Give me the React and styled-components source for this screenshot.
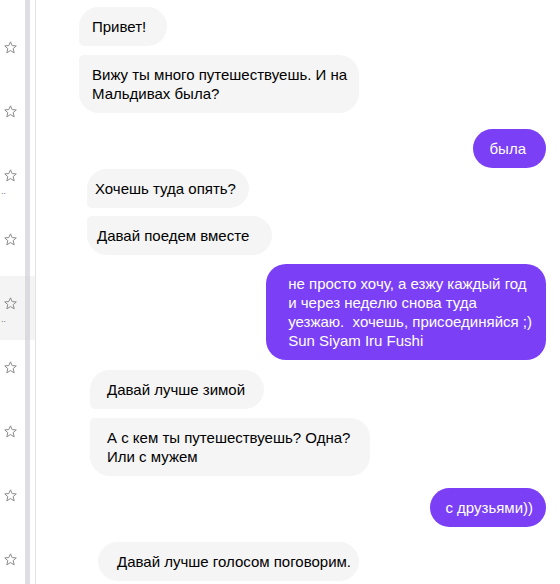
import React from "react";
import styled, { createGlobalStyle } from "styled-components";

const Global = createGlobalStyle`
  html, body { margin: 0; padding: 0; background: #fff; overflow: hidden; }
  body { font-family: "Liberation Sans", Arial, sans-serif; }
`;

const Page = styled.div`
  display: flex;
  width: 560px;
  height: 584px;
  overflow: hidden;
  background: #fff;
`;

const Sidebar = styled.div`
  position: relative;
  flex: 0 0 35px;
  width: 35px;
  height: 100%;
  border-right: 1px solid #e3e3e6;
  display: flex;
  flex-direction: column;
  padding-top: 20px;
  box-sizing: content-box;
  overflow: hidden;
`;

const Row = styled.div`
  position: relative;
  flex: 0 0 64px;
  height: 64px;
  background: ${(p) => (p.$active ? "#f4f4f5" : "transparent")};
`;

const StarBox = styled.div`
  position: absolute;
  left: 4px;
  top: 21px;
  width: 13px;
  height: 13px;
  display: flex;
`;

const Dots = styled.span`
  position: absolute;
  left: 1px;
  top: 38px;
  font-size: 9px;
  line-height: 10px;
  color: #777;
`;

const Scrollbar = styled.div`
  position: absolute;
  left: 25px;
  top: 0;
  width: 5px;
  height: 100%;
  background: rgba(200, 200, 208, 0.6);
`;

const Chat = styled.div`
  flex: 1;
  display: flex;
  flex-direction: column;
  padding: 7px 14px 0 0;
`;

const MsgRow = styled.div`
  display: flex;
  justify-content: ${(p) => (p.$out ? "flex-end" : "flex-start")};
  margin-top: ${(p) => p.$gap || 0}px;
  padding-left: ${(p) => p.$indent || 0}px;
`;

const Bubble = styled.div`
  box-sizing: border-box;
  font-size: 15px;
  line-height: 19px;
  padding: 10px ${(p) => p.$pr}px 10px ${(p) => p.$pl}px;
  border-radius: ${(p) => p.$radius || "20px"};
  background: ${(p) => (p.$out ? "#7b3ff6" : "#f5f5f5")};
  color: ${(p) => (p.$out ? "#ffffff" : "#000000")};
  white-space: pre;
`;

const Star = () => (
  <svg width="13" height="13" viewBox="0 0 13 13">
    <polygon
      points="6.5,0.8 8.2,4.6 12.3,4.9 9.2,7.6 10.2,11.8 6.5,9.6 2.8,11.8 3.8,7.6 0.7,4.9 4.8,4.6"
      fill="none"
      stroke="#8c8c8c"
      strokeWidth="1"
      strokeLinejoin="miter"
    />
  </svg>
);

const rows = [
  {}, {}, { dots: true }, {}, { active: true, dots: true }, {}, {}, {}, {},
];

const FIRST = "20px 20px 20px 5px";
const LAST = "5px 20px 20px 20px";

const messages = [
  { text: "Привет!", indent: 43, gap: 0, pl: 13, pr: 21, radius: FIRST },
  { text: "Вижу ты много путешествуешь. И на\nМальдивах была?", indent: 43, gap: 9, pl: 13, pr: 12, radius: LAST },
  { text: "была", out: true, gap: 16, pl: 17, pr: 20 },
  { text: "Хочешь туда опять?", indent: 51, gap: 1, pl: 8, pr: 13, radius: FIRST },
  { text: "Давай поедем вместе", indent: 51, gap: 8, pl: 10, pr: 23, radius: LAST },
  {
    text: "не просто хочу, а езжу каждый год\nи через неделю снова туда\nуезжаю.  хочешь, присоединяйся ;)\nSun Siyam Iru Fushi",
    out: true,
    gap: 9,
    pl: 22,
    pr: 14,
  },
  { text: "Давай лучше зимой", indent: 54, gap: 10, pl: 17, pr: 19, radius: FIRST },
  { text: "А с кем ты путешествуешь? Одна?\nИли с мужем", indent: 54, gap: 9, pl: 17, pr: 20, radius: LAST },
  { text: "с друзьями))", out: true, gap: 12, pl: 15, pr: 13 },
  { text: "Давай лучше голосом поговорим.", indent: 62, gap: 15, pl: 19, pr: 8 },
];

export default function App() {
  return (
    <>
      <Global />
      <Page>
        <Sidebar>
          {rows.map((r, i) => (
            <Row key={i} $active={r.active}>
              <StarBox>
                <Star />
              </StarBox>
              {r.dots && <Dots>..</Dots>}
            </Row>
          ))}
          <Scrollbar />
        </Sidebar>
        <Chat>
          {messages.map((m, i) => (
            <MsgRow key={i} $out={m.out} $gap={m.gap} $indent={m.indent}>
              <Bubble $out={m.out} $pl={m.pl} $pr={m.pr} $radius={m.radius}>
                {m.text}
              </Bubble>
            </MsgRow>
          ))}
        </Chat>
      </Page>
    </>
  );
}
